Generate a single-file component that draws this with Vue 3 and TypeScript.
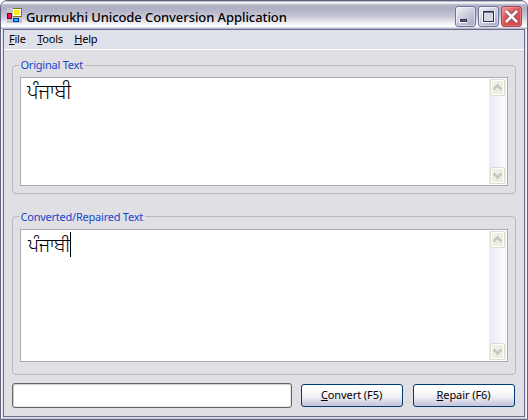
<script setup lang="ts">
import { ref } from 'vue'

interface Label {
  key: string
  rest: string
}

const menus: Label[] = [
  { key: 'F', rest: 'ile' },
  { key: 'T', rest: 'ools' },
  { key: 'H', rest: 'elp' },
]
const actions: Label[] = [
  { key: 'C', rest: 'onvert (F5)' },
  { key: 'R', rest: 'epair (F6)' },
]
const groups = [
  { id: 'original', title: 'Original Text', text: 'ਪੰਜਾਬੀ', caret: false },
  { id: 'converted', title: 'Converted/Repaired Text', text: 'ਪੰਜਾਬੀ', caret: true },
]
const status = ref('')
</script>

<template>
  <div class="window">
    <header class="titlebar">
      <svg class="app-icon" width="16" height="16" viewBox="0 0 16 16" shape-rendering="crispEdges">
        <rect width="15" height="15" fill="#c4c4cc" />
        <rect x="0" y="5" width="5" height="6" fill="#800020" />
        <rect x="1" y="6" width="3" height="4" fill="#f01060" />
        <rect x="6" y="0" width="9" height="9" fill="#777700" />
        <rect x="6" y="1" width="8" height="7" fill="#fff" />
        <rect x="7" y="2" width="6" height="5" fill="#fff200" />
        <rect x="6" y="10" width="6" height="4" fill="#0030c0" />
        <rect x="7" y="11" width="4" height="2" fill="#10c8ff" />
      </svg>
      <h1>Gurmukhi Unicode Conversion Application</h1>
      <div class="controls">
        <button class="ctl" aria-label="Minimize">
          <svg width="19" height="19" viewBox="0 0 19 19" shape-rendering="crispEdges">
            <rect x="3" y="12" width="8" height="4" fill="#fff" />
            <rect x="4" y="12" width="7" height="3" fill="#2c2c50" />
            <rect x="5" y="13" width="5" height="1" fill="#666687" />
          </svg>
        </button>
        <button class="ctl" aria-label="Maximize">
          <svg width="19" height="19" viewBox="0 0 19 19" shape-rendering="crispEdges">
            <rect x="3" y="4" width="13" height="12" fill="#fff" />
            <rect x="4" y="4" width="11" height="11" fill="#2c2c50" />
            <rect x="5" y="5" width="9" height="1" fill="#77778e" />
            <rect x="5" y="6" width="9" height="8" fill="#d6d8e4" />
          </svg>
        </button>
        <button class="ctl close" aria-label="Close">
          <svg width="19" height="19" viewBox="0 0 19 19">
            <path d="M4.500 4.500L14.500 14.500M14.500 4.500L4.500 14.500" stroke="#6c3040" stroke-width="4" />
            <path d="M4 4L15 15M15 4L4 15" stroke="#fff" stroke-width="2.700" />
          </svg>
        </button>
      </div>
    </header>

    <div class="body">
      <nav class="menubar">
        <a v-for="m in menus" :key="m.key"><u>{{ m.key }}</u>{{ m.rest }}</a>
      </nav>
      <main>
        <section v-for="g in groups" :key="g.id" class="group" :class="g.id">
          <h2>{{ g.title }}</h2>
          <div class="editor">
            <div class="text"><span>{{ g.text }}</span><i v-if="g.caret" class="caret"></i></div>
            <div class="scroll">
              <span class="arrow">
                <svg width="13" height="14" viewBox="0 0 13 14"><path d="M2.500 9.500L6.500 5.500L10.500 9.500" /></svg>
              </span>
              <span class="arrow">
                <svg width="13" height="14" viewBox="0 0 13 14"><path d="M2.500 5.500L6.500 9.500L10.500 5.500" /></svg>
              </span>
            </div>
          </div>
        </section>
        <footer>
          <input v-model="status" type="text" />
          <button v-for="a in actions" :key="a.key" class="action"><span><u>{{ a.key }}</u>{{ a.rest }}</span></button>
        </footer>
      </main>
    </div>
  </div>
</template>

<style>
body {
  background: #fff;
}
</style>

<style scoped>
* {
  box-sizing: border-box;
  margin: 0;
}
.window {
  width: 528px;
  height: 420px;
  border: 1px solid #62627c;
  border-radius: 7px 7px 0 0;
  background: #dddde8;
  box-shadow: inset 1px 0 #f8f8fc, inset -1px 0 #f8f8fc, inset 0 -1px #c8c8d8;
  display: flex;
  flex-direction: column;
  overflow: hidden;
  font: 11px/14px "Noto Sans", "Open Sans", sans-serif;
  letter-spacing: -0.23px;
  color: #000;
}
.titlebar {
  height: 28px;
  flex: none;
  display: flex;
  align-items: center;
  padding: 4px 5px 0 6px;
  border-radius: 6px 6px 0 0;
  background: linear-gradient(#74748c 0, #fff 1px, #f4f4f8 2px, #b2b2c6 4px, #b0b0c6 8px, #c5c5d5 15px, #f4f4f8 23px, #fff 26px, #b8b8cc 27px, #b8b8cc 28px);
}
.app-icon {
  flex: none;
  margin-top: -2px;
}
h1 {
  font: 500 13px/18px "Noto Sans", "Open Sans", sans-serif;
  letter-spacing: -0.08px;
  margin-left: 3px;
  flex: 1;
  white-space: nowrap;
}
.controls {
  display: flex;
  gap: 2px;
  margin-top: -2px;
}
.ctl {
  width: 21px;
  height: 21px;
  padding: 0;
  border: 1px solid #75759a;
  border-radius: 3px;
  background: linear-gradient(145deg, #f3f3fa, #d2d2e2 40%, #a6a6c2);
  box-shadow: inset 0 0 0 1px rgba(255, 255, 255, 0.45);
}
.ctl svg {
  display: block;
}
.close {
  border-color: #a84a54;
  background: linear-gradient(145deg, #ee9c9c, #dc5a5a 40%, #c84448);
  box-shadow: inset 0 0 0 1px rgba(255, 180, 180, 0.35);
}
.body {
  flex: 1;
  margin: 0 2px 2px;
  border: 1px solid #6b6b90;
  background: #e0dfe3;
}
.menubar {
  height: 20px;
  display: flex;
  gap: 11.5px;
  padding: 2px 0 0 5px;
  background: #dee1ea;
  border-bottom: 1px solid #fff;
}
main {
  padding: 15px 7px 0 8px;
}
.group {
  position: relative;
  width: 504px;
  height: 129px;
  border: 1px solid #b9b6bc;
  border-radius: 4px;
  padding: 11px 7px 0;
}
.converted {
  height: 159px;
  margin-top: 22px;
  padding-top: 12px;
}
h2 {
  position: absolute;
  left: 5.5px;
  top: -8px;
  padding: 0 2px;
  font: inherit;
  color: #1548cc;
  background: #e0dfe3;
  white-space: nowrap;
}
.converted h2 {
  top: -7px;
}
.editor {
  height: 109px;
  display: flex;
  justify-content: space-between;
  background: #fff;
  border: 1px solid #a5acb2;
  padding: 1px;
}
.converted .editor {
  height: 133px;
}
.text {
  display: flex;
  height: 26px;
  padding: 0 0 0 5px;
  font: 300 20px/25px "Noto Sans", "Noto Sans Gurmukhi", Raavi, sans-serif;
  letter-spacing: 0;
}
.converted .text {
  padding-left: 6px;
  font-size: 19px;
  line-height: 29px;
}
.caret {
  width: 1px;
  height: 25px;
  margin-top: 1px;
  background: #000;
}
.scroll {
  width: 17px;
  display: flex;
  flex-direction: column;
  justify-content: space-between;
  border-left: 1px solid #eeede5;
  border-right: 1px solid #eeede5;
  background: linear-gradient(90deg, #eaebf4, #fdfdff);
}
.arrow {
  width: 15px;
  height: 17px;
  border: 1px solid #dcdccf;
  border-radius: 2px;
  background: #eeeee8;
  box-shadow: inset 0 0 0 1px #fff;
}
.arrow svg {
  display: block;
}
.arrow path {
  fill: none;
  stroke: #c6c6c0;
  stroke-width: 2.5;
}
footer {
  display: flex;
  align-items: center;
  margin-top: 8px;
}
input {
  width: 280px;
  height: 25px;
  border: 1px solid #646464;
  border-radius: 3px;
  background: #fff;
  box-shadow: inset 1px 1px #d0d0d0, inset -1px -1px #e8e8e8;
  outline: 0;
  margin-right: 9px;
}
.action {
  width: 102px;
  height: 23px;
  padding: 0 1px 2px 0;
  border: 1px solid #003c74;
  border-radius: 3px;
  background: linear-gradient(#fff 20%, #f0f0f6 55%, #c8c7dc 95%);
  font: inherit;
  letter-spacing: -0.08px;
  color: #000;
  margin-right: 10px;
}
.action:last-child {
  margin-right: 0;
}
u {
  text-underline-offset: 1px;
  text-decoration-thickness: 1px;
  text-decoration-skip-ink: none;
}
</style>
